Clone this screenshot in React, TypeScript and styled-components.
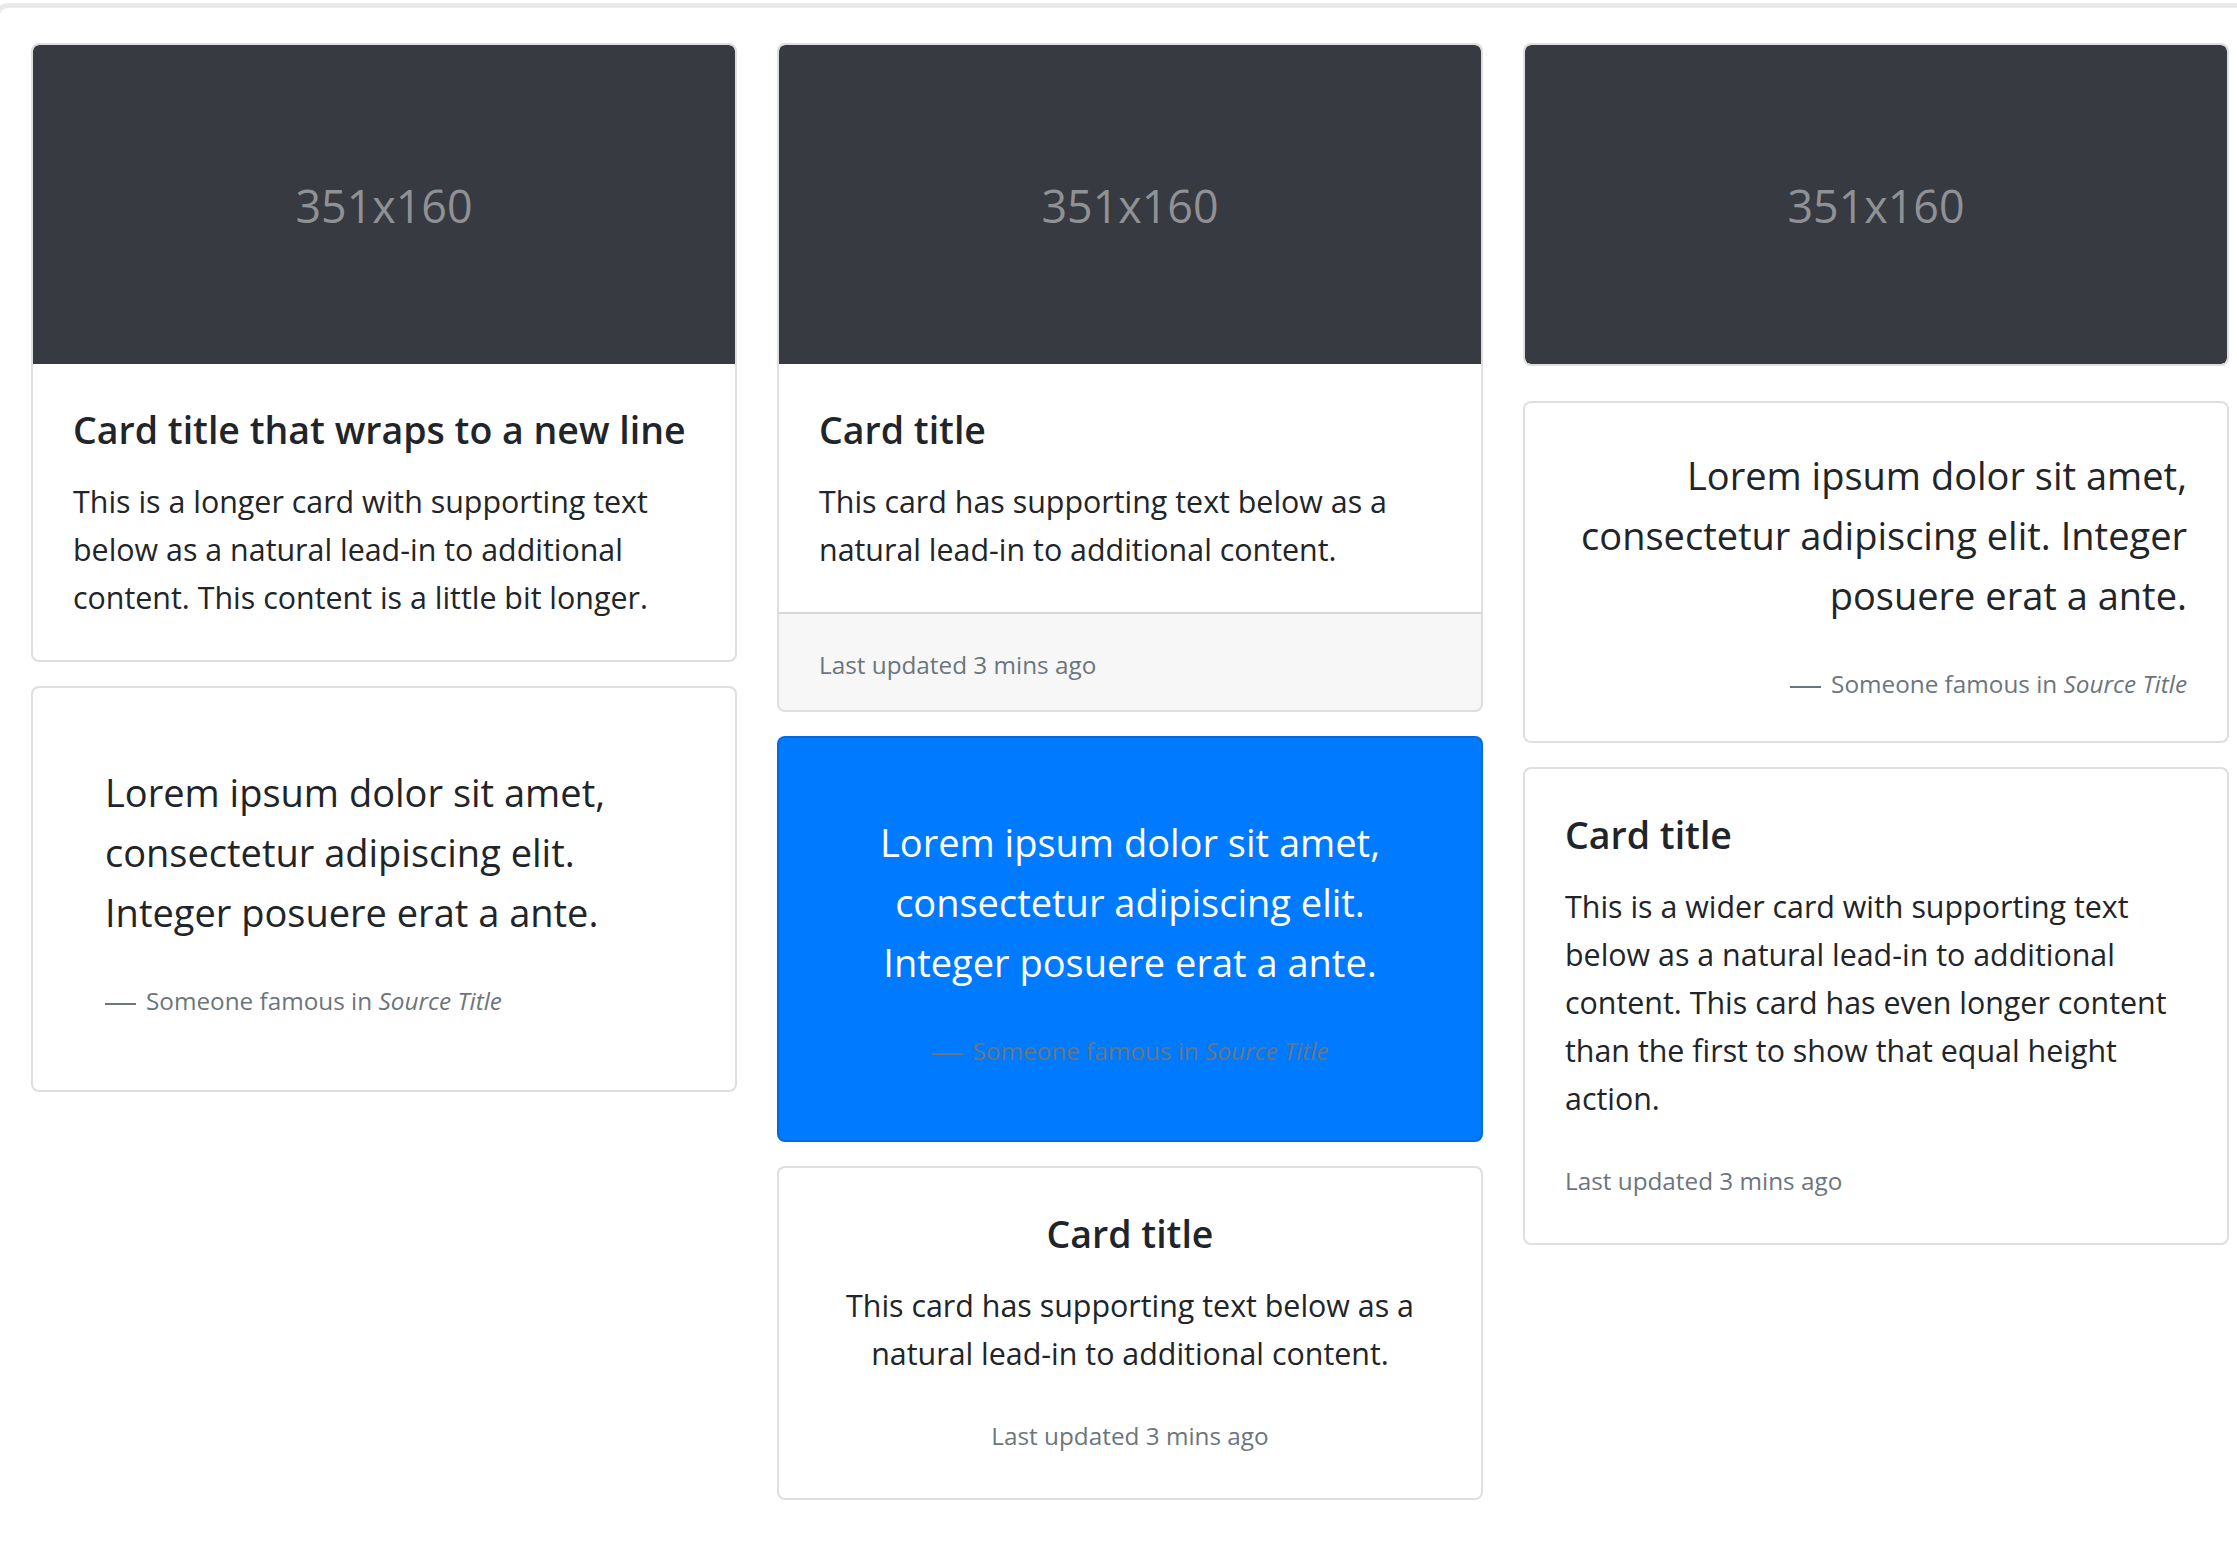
import React from "react";
import styled, { createGlobalStyle, css } from "styled-components";

const GlobalStyle = createGlobalStyle`
  html, body {
    margin: 0;
    padding: 0;
    background: #ffffff;
  }
  body {
    font-family: "Open Sans", "Noto Sans", sans-serif;
    color: #212529;
    font-size: 30.4px;
    line-height: 48px;
    -webkit-font-smoothing: antialiased;
  }
  * { box-sizing: border-box; }
`;

const Frame = styled.div`
  margin: 3px 0 0 -5px;
  border-top: 5px solid #eaeaea;
  border-left: 5px solid #eaeaea;
  border-top-left-radius: 13px;
  padding: 35px 8px 40px 31px;
`;

const CardColumns = styled.div`
  display: grid;
  grid-template-columns: repeat(3, minmax(0, 1fr));
  column-gap: 40px;
  align-items: start;
`;

const Column = styled.div`
  display: flex;
  flex-direction: column;
`;

type Align = "left" | "center" | "right";

const Card = styled.div<{ $primary?: boolean; $padded?: boolean; $align?: Align; $spaceAfter?: number }>`
  display: flex;
  flex-direction: column;
  border: 2px solid rgba(0, 0, 0, 0.125);
  border-radius: 8px;
  background: #ffffff;
  overflow: hidden;
  margin-bottom: ${(p) => p.$spaceAfter ?? 24}px;
  text-align: ${(p) => p.$align ?? "left"};
  ${(p) => p.$padded && css`padding: 32px;`}
  ${(p) =>
    p.$primary &&
    css`
      background: #007bff;
      color: #ffffff;
    `}
`;

const Placeholder = styled.div<{ $alone?: boolean }>`
  height: 319px;
  background: #373a40;
  color: #8f9195;
  font-size: 44.8px;
  display: flex;
  align-items: center;
  justify-content: center;
  padding-top: 2px;
  border-radius: ${(p) => (p.$alone ? "6px" : "6px 6px 0 0")};
`;

const CardBody = styled.div`
  padding: 42px 40px 38px;
`;

const CardTitle = styled.h5`
  margin: 0 0 24px;
  font-size: 37.5px;
  font-weight: 600;
  line-height: 48px;
  color: #212529;
`;

const CardText = styled.p`
  margin: 0 0 32px;
  font-size: 30.4px;
  line-height: 48px;
  &:last-child {
    margin-bottom: 0;
  }
`;

const Muted = styled.small`
  font-size: 24.3px;
  color: #6c757d;
`;

const CardFooter = styled.div`
  padding: 25px 40px 21px;
  background: rgba(0, 0, 0, 0.03);
  border-top: 2px solid rgba(0, 0, 0, 0.125);
  line-height: 48px;
`;

const Blockquote = styled.blockquote`
  margin: 0;
  padding: 42px 40px 38px;
  font-size: 38px;
  line-height: 60px;
  p {
    margin: 0 0 40px;
  }
`;

const QuoteFooter = styled.footer`
  display: block;
  font-size: 24.3px;
  line-height: 38.4px;
  color: #6c757d;
  &::before {
    content: "";
    display: inline-block;
    width: 31px;
    height: 2px;
    background: currentColor;
    vertical-align: middle;
    margin-right: 10px;
  }
  cite {
    font-style: italic;
  }
`;

const QUOTE = "Lorem ipsum dolor sit amet, consectetur adipiscing elit. Integer posuere erat a ante.";

function Quote() {
  return (
    <Blockquote>
      <p>{QUOTE}</p>
      <QuoteFooter>
        Someone famous in <cite title="Source Title">Source Title</cite>
      </QuoteFooter>
    </Blockquote>
  );
}

export default function App() {
  return (
    <>
      <GlobalStyle />
      <Frame>
        <CardColumns>
          <Column>
            <Card>
              <Placeholder>351x160</Placeholder>
              <CardBody>
                <CardTitle>Card title that wraps to a new line</CardTitle>
                <CardText>
                  This is a longer card with supporting text below as a natural lead-in to additional content. This
                  content is a little bit longer.
                </CardText>
              </CardBody>
            </Card>
            <Card $padded>
              <Quote />
            </Card>
          </Column>

          <Column>
            <Card>
              <Placeholder>351x160</Placeholder>
              <CardBody>
                <CardTitle>Card title</CardTitle>
                <CardText>This card has supporting text below as a natural lead-in to additional content.</CardText>
              </CardBody>
              <CardFooter>
                <Muted>Last updated 3 mins ago</Muted>
              </CardFooter>
            </Card>
            <Card $primary $padded $align="center">
              <Quote />
            </Card>
            <Card $align="center">
              <CardBody>
                <CardTitle>Card title</CardTitle>
                <CardText>This card has supporting text below as a natural lead-in to additional content.</CardText>
                <CardText>
                  <Muted>Last updated 3 mins ago</Muted>
                </CardText>
              </CardBody>
            </Card>
          </Column>

          <Column>
            <Card $spaceAfter={35}>
              <Placeholder $alone>351x160</Placeholder>
            </Card>
            <Card $align="right">
              <Quote />
            </Card>
            <Card>
              <CardBody>
                <CardTitle>Card title</CardTitle>
                <CardText>
                  This is a wider card with supporting text below as a natural lead-in to additional content. This card
                  has even longer content than the first to show that equal height action.
                </CardText>
                <CardText>
                  <Muted>Last updated 3 mins ago</Muted>
                </CardText>
              </CardBody>
            </Card>
          </Column>
        </CardColumns>
      </Frame>
    </>
  );
}
